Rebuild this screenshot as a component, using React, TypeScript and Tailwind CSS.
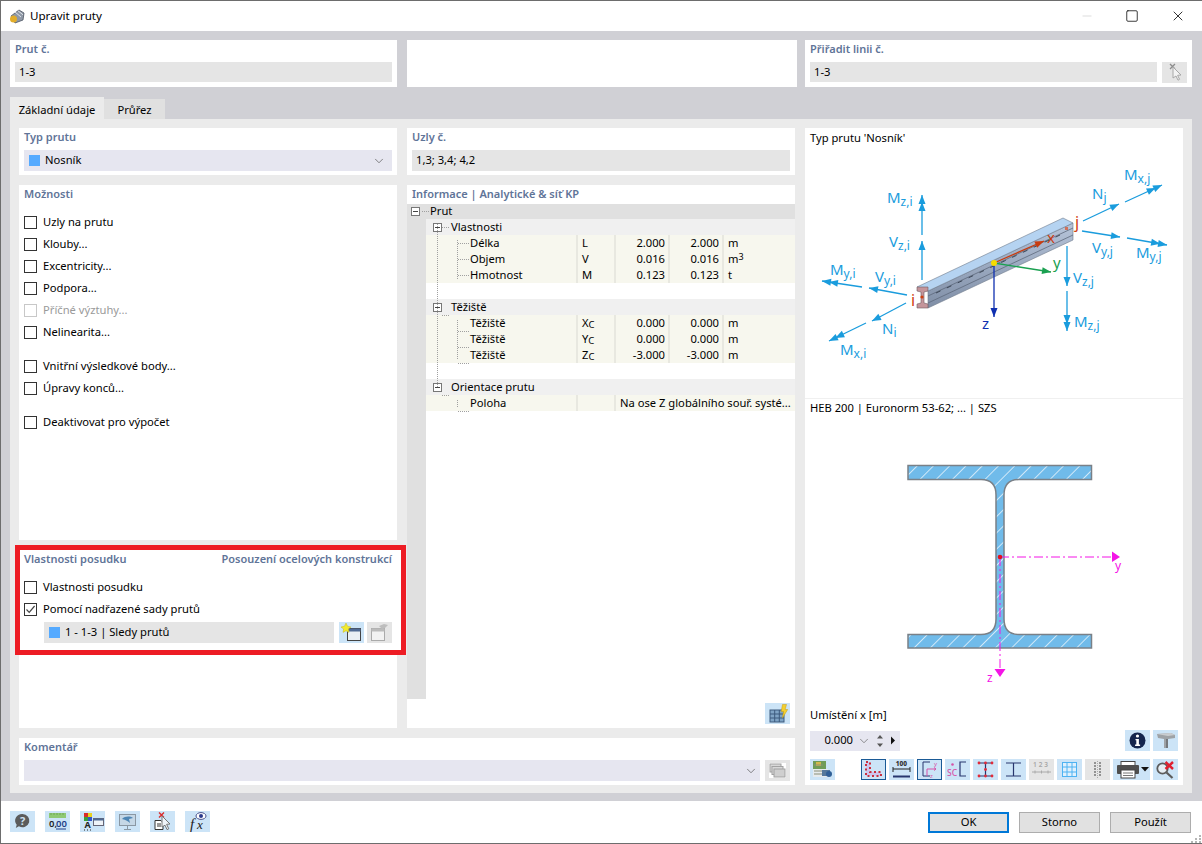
import type { ReactNode } from "react";
import { ChevronDown, Minus, Square, X } from "lucide-react";

function Panel({ title, right, className = "", children }: { title: string; right?: string; className?: string; children?: ReactNode }) {
  return (
    <div className={`bg-white px-[5px] ${className}`}>
      <div className="flex h-[22px] items-center justify-between pb-[4px] text-[11px] font-semibold text-[#5f7498]">
        <span>{title}</span>
        {right ? <span>{right}</span> : null}
      </div>
      {children}
    </div>
  );
}

function Field({ children, className = "" }: { children?: ReactNode; className?: string }) {
  return <div className={`flex h-[20px] items-center bg-[#e5e5e5] pl-[4px] pt-[1px] ${className}`}>{children}</div>;
}

function Check({ label, checked, disabled }: { label: string; checked?: boolean; disabled?: boolean }) {
  return (
    <div className={`flex h-[22px] items-center gap-[6px] ${disabled ? "text-[#9a9a9a]" : ""}`}>
      <span className={`flex h-[13px] w-[13px] items-center justify-center border ${disabled ? "border-[#c8c8c8]" : "border-[#333333]"}`}>
        {checked ? (
          <svg width="11" height="11" viewBox="0 0 11 11">
            <path d="M1.5 5.5 4.2 8.3 9.6 2" fill="none" stroke="#444" strokeWidth="1.2" />
          </svg>
        ) : null}
      </span>
      <span>{label}</span>
    </div>
  );
}

function Tool({ children, active, off, wide }: { children: ReactNode; active?: boolean; off?: boolean; wide?: boolean }) {
  return (
    <div
      className={`flex h-[21px] shrink-0 items-center justify-center ${wide ? "w-[37px]" : "w-[25px]"} ${off ? "bg-[#e5e5e5]" : "bg-[#cce4f7]"} ${
        active ? "border border-[#1a5a96]" : ""
      }`}
    >
      {children}
    </div>
  );
}

function Ico({ children, w = 25 }: { children: ReactNode; w?: number }) {
  return (
    <svg width={w} height="21" viewBox={`0 0 ${w} 21`} className="shrink-0">
      {children}
    </svg>
  );
}

const icons = {
  help: (
    <Ico>
      <path d="M12.5 3a7 6.6 0 1 1-3.6 12.3L5.8 17l.9-3.3A7 6.6 0 0 1 12.5 3Z" fill="#5c5c5c" />
      <text x="12.5" y="13.5" fontSize="11" fontWeight="700" fill="#cfe3f3" textAnchor="middle">?</text>
    </Ico>
  ),
  decimals: (
    <Ico>
      <rect x="4" y="2" width="17" height="5" fill="#8fc974" />
      <path d="M6 2v2M9 2v2M12 2v2M15 2v2M18 2v2" stroke="#6fa855" />
      <text x="4" y="16" fontSize="9.5" fontWeight="600" fill="#222">0,</text>
      <text x="11" y="16" fontSize="9.5" fontWeight="600" fill="#1f3f86">00</text>
      <path d="M11 18h10" stroke="#1f3f86" />
    </Ico>
  ),
  colors: (
    <Ico>
      <rect x="4" y="2" width="4" height="4" fill="#d92b2b" />
      <rect x="8" y="2" width="4" height="4" fill="#e8d21f" />
      <rect x="4" y="6" width="4" height="4" fill="#37a03a" />
      <rect x="8" y="6" width="4" height="4" fill="#3255c8" />
      <text x="4.5" y="17" fontSize="9" fontWeight="700" fill="#222">A</text>
      <path d="M4 19h1M7 19h1M10 19h1" stroke="#222" />
      <rect x="13.5" y="7.5" width="10" height="7" fill="#eef3f8" stroke="#667" />
      <rect x="13.5" y="7.5" width="10" height="2" fill="#4f6a94" />
    </Ico>
  ),
  display: (
    <Ico>
      <rect x="4.5" y="3.5" width="16" height="11" fill="#c5d7e6" stroke="#8a97a3" />
      <path d="M7 8c3-3 8-3 11-1l-4 1 1 4c-2-2-4-3-8-4Z" fill="#4e86b5" />
      <path d="M12.5 15v3M9 18.5h7" stroke="#8a97a3" />
    </Ico>
  ),
  delDoc: (
    <Ico>
      <path d="M9 1.5l5 5M14 1.5l-5 5" stroke="#d92b2b" strokeWidth="1.4" />
      <path d="M5 9.5h6l2 2v7H5Z" fill="#fff" stroke="#333" />
      <path d="M7 13h4M7 15h4" stroke="#333" />
      <path d="M12 5l8 8-3.4.3 2.2 4.5-1.8.8-2-4.4L12 16Z" fill="#eef3f8" stroke="#777" />
    </Ico>
  ),
  fx: (
    <Ico>
      <text x="5" y="18" fontSize="15" fontFamily="Liberation Serif, serif" fontStyle="italic" fill="#222">f</text>
      <text x="12" y="18" fontSize="13" fontFamily="Liberation Serif, serif" fontStyle="italic" fill="#222">x</text>
      <ellipse cx="16" cy="5" rx="5" ry="3.4" fill="#fff" stroke="#46508c" />
      <circle cx="16" cy="5" r="2" fill="#2c3a8c" />
    </Ico>
  ),
  pick: (
    <Ico>
      <path d="M8 2l5 5M13 2l-5 5" stroke="#8d8d8d" strokeWidth="1.3" />
      <path d="M11 5l8 8-3.4.3 2 4-1.6.9-2-4.2L11 16Z" fill="#f3f3f3" stroke="#a8a8a8" />
    </Ico>
  ),
  newSet: (
    <Ico>
      <rect x="8.5" y="6.5" width="13" height="12" fill="#e9eff5" stroke="#444" />
      <rect x="8.5" y="6.5" width="13" height="3" fill="#4f6a94" />
      <path d="M7 1l1.5 3.2L12 5 9.4 7 10 10.4 7 8.7 4 10.4 4.6 7 2 5l3.5-.8Z" fill="#f2ea2d" stroke="#c6b91d" strokeWidth=".5" />
    </Ico>
  ),
  editSet: (
    <Ico>
      <rect x="4.5" y="6.5" width="13" height="12" fill="#f2f2f2" stroke="#aaa" />
      <rect x="4.5" y="6.5" width="13" height="3" fill="#bbb" />
      <path d="M12 4l5-2 4 1-3 3-3 1Z" fill="#bdbdbd" />
    </Ico>
  ),
  gridBolt: (
    <Ico>
      <rect x="5" y="7" width="14" height="12" fill="#7fa4c6" stroke="#3d5a7e" />
      <path d="M5 11h14M5 15h14M9.7 7v12M14.3 7v12" stroke="#3d5a7e" />
      <path d="M17.5 1.5h4l-1.4 5h2.6L17.5 15l1-6.5h-2.3Z" fill="#f4cf2f" stroke="#c59c12" strokeWidth=".5" />
    </Ico>
  ),
  copies: (
    <Ico>
      <rect x="4" y="3" width="17" height="15" fill="#fff" />
      <rect x="5" y="4" width="11" height="8" fill="#d8d8d8" stroke="#a2a2a2" />
      <rect x="7" y="6.5" width="11" height="8" fill="#d8d8d8" stroke="#a2a2a2" />
      <rect x="9" y="9" width="11" height="8" fill="#cfcfcf" stroke="#a2a2a2" />
    </Ico>
  ),
  model: (
    <Ico>
      <rect x="3" y="2" width="13" height="8" fill="#6f9c58" />
      <rect x="6" y="3" width="5" height="4" fill="#d2b84c" />
      <rect x="3" y="10" width="15" height="8" fill="#e6ebee" />
      <rect x="12" y="11" width="8" height="6" fill="#54789c" />
      <path d="M4 6h9M4 12h8M4 15h8" stroke="#8a8f78" />
      <circle cx="19" cy="15" r="3" fill="#2f5f97" />
    </Ico>
  ),
  lShape: (
    <Ico w={23}>
      <path d="M4 3h4v10h11v4H4Z" fill="#cdc6ee" stroke="#c9303f" strokeWidth="2" strokeDasharray="2 2.5" />
    </Ico>
  ),
  dimension: (
    <Ico>
      <text x="12.5" y="6.5" fontSize="6.5" fontWeight="800" fill="#333" textAnchor="middle">100</text>
      <path d="M4 8v5M21 8v5M4 10h17" stroke="#222" />
      <path d="M4 17.5h17" stroke="#28366e" strokeWidth="2" />
    </Ico>
  ),
  axes: (
    <Ico w={23}>
      <path d="M12 3H5v14h7" fill="none" stroke="#28366e" />
      <path d="M9 10h9M9 10v7M16 8.5l2 1.5-2 1.5" fill="none" stroke="#d653a8" />
      <text x="16" y="6.5" fontSize="6" fill="#d653a8">y</text>
      <text x="12" y="18.5" fontSize="6" fill="#d653a8">z</text>
    </Ico>
  ),
  sc: (
    <Ico>
      <circle cx="7.5" cy="5.5" r="1.3" fill="#d653a8" />
      <text x="2" y="17" fontSize="8.5" fontWeight="500" fill="#d653a8">SC</text>
      <path d="M21 3h-6v14h6" fill="none" stroke="#28366e" strokeWidth="1.2" />
    </Ico>
  ),
  iRed: (
    <Ico>
      <path d="M6 4h13M6 17h13M12.5 4v13" stroke="#28366e" strokeWidth="1.2" />
      <g fill="#e02b3a">
        <circle cx="6" cy="4" r="1.4" />
        <circle cx="12.5" cy="4" r="1.4" />
        <circle cx="19" cy="4" r="1.4" />
        <circle cx="12.5" cy="10.5" r="1.4" />
        <circle cx="6" cy="17" r="1.4" />
        <circle cx="12.5" cy="17" r="1.4" />
        <circle cx="19" cy="17" r="1.4" />
      </g>
    </Ico>
  ),
  iPlain: (
    <Ico>
      <path d="M5 4h15M5 17h15M12.5 4v13" stroke="#28366e" strokeWidth="1.2" />
    </Ico>
  ),
  numbers: (
    <Ico>
      <text x="12.5" y="8" fontSize="6.5" fontWeight="600" fill="#a5a5a5" textAnchor="middle" letterSpacing="2">123</text>
      <path d="M3 13h19M6 11.5v3M12.5 11.5v3M19 11.5v3" stroke="#aaa" />
    </Ico>
  ),
  grid: (
    <Ico>
      <rect x="5.5" y="3.5" width="14" height="14" fill="#dff0fd" stroke="#4db2f2" />
      <path d="M5.5 8h14M5.5 13h14M10 3.5v14M15 3.5v14" stroke="#4db2f2" />
    </Ico>
  ),
  dots: (
    <Ico>
      <path d="M9 4h2M14 4h2M9 7h2M14 7h2M9 10h2M14 10h2M9 13h2M14 13h2M9 16h2M14 16h2" stroke="#777" strokeWidth="1.5" />
      <path d="M12.5 2v17" stroke="#aaa" strokeDasharray="1 1" />
    </Ico>
  ),
  print: (
    <Ico w={37}>
      <rect x="8" y="2.5" width="14" height="4" fill="#fff" stroke="#444" />
      <rect x="4" y="6" width="22" height="9" rx="1" fill="#4e4e4e" />
      <rect x="8" y="11" width="14" height="8" fill="#fff" stroke="#444" />
      <path d="M10 14h10M10 16.5h10" stroke="#777" />
      <path d="M28 8h8l-4 4.5Z" fill="#111" />
    </Ico>
  ),
  zoomX: (
    <Ico>
      <circle cx="9.5" cy="9.5" r="5.2" fill="#e6eef4" stroke="#5c5c5c" strokeWidth="1.8" />
      <path d="M13.5 13.5l6 5.5" stroke="#5c5c5c" strokeWidth="2.2" />
      <path d="M12.5 3l7.5 7M20 3l-7.5 7" stroke="#e02030" strokeWidth="2.4" />
    </Ico>
  ),
  info: (
    <Ico>
      <circle cx="12.5" cy="10.5" r="8" fill="#15254d" />
      <circle cx="12.5" cy="6" r="1.6" fill="#fff" />
      <path d="M10.5 9h3.4v5.5h1.2v1.4h-5v-1.4h1.2v-4.2h-.8Z" fill="#fff" />
    </Ico>
  ),
  tee: (
    <Ico>
      <path d="M4 4l14-1 4 2v3l-7 1v9l-4 0V9L5 8Z" fill="#9ea2a6" />
      <path d="M4 4l14-1 4 2-7 1Z" fill="#c9cccf" />
      <path d="M15 9v9h-2V9Z" fill="#74787c" />
    </Ico>
  ),
};

function Label({ x, y, label, sub, color = "#1a9cdd", size = 15 }: { x: number; y: number; label: string; sub?: string; color?: string; size?: number }) {
  return (
    <text x={x} y={y} fontSize={size} fill={color}>
      {label}
      {sub ? (
        <tspan dy="3" fontSize={size - 3}>
          {sub}
        </tspan>
      ) : null}
    </text>
  );
}

const arrows = [
  [922, 280, 922, 241],
  [922, 235, 922, 195],
  [907, 295, 869, 288],
  [862, 287, 822, 281],
  [906, 303, 872, 321],
  [866, 323, 829, 341],
  [1083, 221, 1119, 204],
  [1125, 202, 1162, 185],
  [1082, 231, 1120, 237],
  [1127, 238, 1167, 245],
  [1067, 246, 1067, 286],
  [1067, 291, 1067, 331],
];

function Head({ x1, y1, x2, y2, color, len = 9, w = 3.5 }: { x1: number; y1: number; x2: number; y2: number; color: string; len?: number; w?: number }) {
  const d = Math.hypot(x2 - x1, y2 - y1);
  const ux = (x2 - x1) / d;
  const uy = (y2 - y1) / d;
  const bx = x2 - ux * len;
  const by = y2 - uy * len;
  return <polygon points={`${x2},${y2} ${bx - uy * w},${by + ux * w} ${bx + uy * w},${by - ux * w}`} fill={color} />;
}

function MemberDiagram() {
  return (
    <svg width="378" height="249" viewBox="805 149 378 249" className="block shrink-0">
      <defs>
        <linearGradient id="beamSide" x1="0" y1="0" x2="0" y2="1">
          <stop offset="0" stopColor="#b7c5da" />
          <stop offset="1" stopColor="#7f8ea6" />
        </linearGradient>
      </defs>
      {arrows.map(([x1, y1, x2, y2], i) => (
        <g key={i}>
          <line x1={x1} y1={y1} x2={x2} y2={y2} stroke="#1a9cdd" strokeWidth="1.3" />
          <Head x1={x1} y1={y1} x2={x2} y2={y2} color="#1a9cdd" />
          {i % 2 === 1 ? (
            <Head x1={x1} y1={y1} x2={x2 - ((x2 - x1) / Math.hypot(x2 - x1, y2 - y1)) * 7} y2={y2 - ((y2 - y1) / Math.hypot(x2 - x1, y2 - y1)) * 7} color="#1a9cdd" />
          ) : null}
        </g>
      ))}
      <polygon points="928,291 1073,223 1073,240 928,308" fill="url(#beamSide)" stroke="#6f7a8c" strokeWidth=".6" />
      <polygon points="917,287 1063,218 1073,223 928,291" fill="#b5d3f1" stroke="#6f7a8c" strokeWidth=".6" />
      <path d="M928 296 1073 228M928 303 1073 235" stroke="#5e6a7c" strokeWidth=".8" />
      <path d="M936 293 1060 235" stroke="#333d4d" strokeWidth=".9" strokeDasharray="5 7" />
      <path d="M917 287h11v4l-4 1v11l4 1v4h-11v-4l4-1v-11l-4-1Z" fill="#c4959b" stroke="#6f5a62" strokeWidth=".6" />
      <circle cx="922" cy="297" r="1.6" fill="#d04010" />
      <rect x="1065" y="227" width="3" height="3" fill="#d0705a" />
      <line x1="994" y1="263" x2="1044" y2="241" stroke="#c83c10" strokeWidth="1.3" />
      <Head x1={994} y1={263} x2={1044} y2={241} color="#c83c10" />
      <line x1="994" y1="263" x2="1051" y2="272" stroke="#1aa050" strokeWidth="1.3" />
      <Head x1={994} y1={263} x2={1051} y2={272} color="#1aa050" />
      <line x1="994" y1="263" x2="994" y2="317" stroke="#1030b0" strokeWidth="1.3" />
      <Head x1={994} y1={263} x2={994} y2={317} color="#1030b0" />
      <circle cx="994" cy="263" r="3" fill="#f6dc00" />

      <Label x={887} y={203} label="M" sub="z,i" />
      <Label x={889} y={247} label="V" sub="z,i" />
      <Label x={830} y={275} label="M" sub="y,i" />
      <Label x={875} y={282} label="V" sub="y,i" />
      <Label x={882} y={334} label="N" sub="i" />
      <Label x={840} y={355} label="M" sub="x,i" />
      <Label x={1124} y={180} label="M" sub="x,j" />
      <Label x={1092} y={199} label="N" sub="j" />
      <Label x={1092} y={253} label="V" sub="y,j" />
      <Label x={1136} y={258} label="M" sub="y,j" />
      <Label x={1073} y={283} label="V" sub="z,j" />
      <Label x={1074} y={327} label="M" sub="z,j" />
      <Label x={911} y={306} label="i" color="#d04010" size={16} />
      <Label x={1075} y={228} label="j" color="#d04010" size={16} />
      <Label x={1047} y={243} label="x" color="#c83c10" size={15} />
      <Label x={1053} y={268} label="y" color="#1aa050" size={15} />
      <Label x={982} y={329} label="z" color="#1030b0" size={15} />
    </svg>
  );
}

function SectionDiagram() {
  return (
    <svg width="378" height="287" viewBox="805 418 378 287" className="block shrink-0">
      <defs>
        <pattern id="hatch" width="11.5" height="11.5" patternUnits="userSpaceOnUse" patternTransform="rotate(45)">
          <rect width="11.5" height="11.5" fill="#70bbea" />
          <line x1="0" y1="0" x2="0" y2="11.5" stroke="#e6f3fb" strokeWidth="1.6" />
        </pattern>
      </defs>
      <path
        d="M908 465.5H1091.5V479.5H1019Q1004 479.5 1004 495V619Q1004 634.5 1019 634.5H1091.5V648H908V634.5H981Q996 634.5 996 619V495Q996 479.5 981 479.5H908Z"
        fill="url(#hatch)"
        stroke="#7a8087"
        strokeWidth="1.5"
      />
      <line x1="1000" y1="557" x2="1114" y2="557" stroke="#f414e6" strokeWidth="1" strokeDasharray="9 3 2 3" />
      <polygon points="1112,551.5 1120,557 1112,562" fill="#f414e6" />
      <line x1="1000" y1="557" x2="1000" y2="670" stroke="#f414e6" strokeWidth="1" strokeDasharray="9 3 2 3" />
      <polygon points="994.5,669 1005.5,669 1000,677" fill="#f414e6" />
      <circle cx="1000" cy="557" r="2.3" fill="#e4101c" />
      <text x="1115" y="570" fontSize="12" fill="#f414e6">y</text>
      <text x="987" y="682" fontSize="12" fill="#f414e6">z</text>
    </svg>
  );
}

function Tree({ x, y = 4 }: { x: number; y?: number }) {
  return (
    <span className="absolute flex h-[9px] w-[9px] items-center justify-center border border-[#777777] bg-white" style={{ left: x, top: y }}>
      <span className="h-px w-[5px] bg-[#444444]" />
    </span>
  );
}

function DataRow({ name, sym, sub, a, b, unit, sup }: { name: string; sym: string; sub?: string; a: string; b: string; unit: string; sup?: string }) {
  return (
    <div className="grid h-4 grid-cols-[150px_38px_54px_54px_1fr] items-center bg-[#f7f7ee]">
      <span className="pl-[44px]">{name}</span>
      <span className="flex h-4 items-center border-l-2 border-[#e8e8e0] pl-1">
        {sym}
        {sub ? <span className="mt-[3px] text-[9.5px]">{sub}</span> : null}
      </span>
      <span className="flex h-4 items-center justify-end border-l-2 border-[#e8e8e0] pr-[3px]">{a}</span>
      <span className="flex h-4 items-center justify-end border-l-2 border-[#e8e8e0] pr-[3px]">{b}</span>
      <span className="flex h-4 items-center border-l-2 border-[#e8e8e0] pl-1">
        {unit}
        {sup ? <span className="mb-[5px] text-[9px]">{sup}</span> : null}
      </span>
    </div>
  );
}

function GroupRow({ label, x = 7 }: { label: string; x?: number }) {
  return (
    <div className="relative flex h-4 items-center bg-[#f0f0f0] pl-[25px]">
      <Tree x={x} />
      {label}
    </div>
  );
}

function InfoTree() {
  return (
    <div className="relative -mx-[5px] flex-1">
      <div className="relative flex h-[15px] items-center bg-[#e0e0e0] pl-[23px]">
        <Tree x={4} y={3} />
        Prut
      </div>
      <div className="flex">
        <div className="h-[480px] w-[19px] bg-[#e0e0e0]" />
        <div className="flex-1">
          <GroupRow label="Vlastnosti" />
          <DataRow name="Délka" sym="L" a="2.000" b="2.000" unit="m" />
          <DataRow name="Objem" sym="V" a="0.016" b="0.016" unit="m" sup="3" />
          <DataRow name="Hmotnost" sym="M" a="0.123" b="0.123" unit="t" />
          <div className="h-4" />
          <GroupRow label="Těžiště" />
          <DataRow name="Těžiště" sym="X" sub="C" a="0.000" b="0.000" unit="m" />
          <DataRow name="Těžiště" sym="Y" sub="C" a="0.000" b="0.000" unit="m" />
          <DataRow name="Těžiště" sym="Z" sub="C" a="-3.000" b="-3.000" unit="m" />
          <div className="h-4" />
          <GroupRow label="Orientace prutu" />
          <div className="grid h-4 grid-cols-[150px_38px_1fr] items-center bg-[#f7f7ee]">
            <span className="pl-[44px]">Poloha</span>
            <span className="h-4 border-l-2 border-[#e8e8e0]" />
            <span className="flex h-4 items-center whitespace-nowrap border-l-2 border-[#e8e8e0] pl-1">Na ose Z globálního souř. systé...</span>
          </div>
        </div>
      </div>
      {/* dotted tree lines */}
      <svg className="pointer-events-none absolute left-0 top-0" width="70" height="210" viewBox="0 0 70 210">
        <path d="M30.5 20V183M50.5 36V76M50.5 116V156M50.5 196V204" stroke="#a0a0a0" strokeDasharray="1 1" fill="none" />
        <path d="M15 7.5H22M35 23.5H42M51 39.5H62M51 55.5H62M51 71.5H62M35 111.5H42M51 127.5H62M51 143.5H62M51 159.5H62M35 191.5H42M51 207.5H62" stroke="#a0a0a0" strokeDasharray="1 1" fill="none" />
      </svg>
    </div>
  );
}

function DialogButton({ children, primary }: { children: ReactNode; primary?: boolean }) {
  return (
    <div className={`flex h-[21px] w-[81px] items-center justify-center bg-[#e1e1e1] ${primary ? "border-2 border-[#0078d7]" : "border border-[#adadad]"}`}>
      {children}
    </div>
  );
}

export default function App() {
  return (
    <div className="relative flex h-[844px] w-[1202px] flex-col overflow-hidden border-b border-l border-t border-[#6d6d6d] bg-white font-['Noto_Sans',sans-serif] text-[11.2px] text-black">
      {/* title bar */}
      <div className="flex h-[30px] shrink-0 items-center pl-[8px]">
        <svg width="16" height="16" viewBox="0 0 16 16" className="shrink-0">
          <path d="M2 8l8-6 5 3-1 7-8 3Z" fill="#8f98a6" stroke="#4c5462" strokeWidth=".8" />
          <path d="M6 4l6 5M9 2.8l5 4" stroke="#dfe4ea" />
          <circle cx="4.5" cy="11" r="3.5" fill="#e2ad2a" />
        </svg>
        <span className="ml-[5px] text-[11.6px]">Upravit pruty</span>
        <div className="ml-auto flex items-center text-black">
          <Minus className="mr-[31px] h-[14px] w-[14px] text-[#c4c4c4]" strokeWidth={1} />
          <Square className="mr-[31px] h-[14px] w-[14px]" strokeWidth={1.3} />
          <X className="mr-[16px] h-[16px] w-[16px]" strokeWidth={1.2} />
        </div>
      </div>

      {/* body */}
      <div className="flex h-[770px] shrink-0 flex-col bg-[#d0d0d5] pl-[9px] pr-[10px] pt-[9px]">
        <div className="flex h-[47px] shrink-0">
          <Panel title="Prut č." className="w-[387px]">
            <Field>1-3</Field>
          </Panel>
          <div className="ml-[10px] w-[390px] bg-white" />
          <Panel title="Přiřadit linii č." className="ml-[8px] w-[387px]">
            <div className="flex gap-[5px]">
              <Field className="flex-1">1-3</Field>
              <Tool off>{icons.pick}</Tool>
            </div>
          </Panel>
        </div>

        <div className="mt-[10px] flex h-[22px] shrink-0 items-end">
          <div className="flex h-[22px] w-[94px] items-center justify-center bg-[#ebebeb] pt-[4px]">Základní údaje</div>
          <div className="flex h-[20px] w-[61px] items-center justify-center bg-[#e0e0e0] pt-[2px]">Průřez</div>
        </div>

        <div className="flex h-[674px] shrink-0 gap-[10px] bg-[#ebebeb] p-[9px] pb-[8px]">
          <div className="flex w-[776px] flex-col gap-[10px]">
            <div className="flex h-[600px] gap-[10px]">
              {/* left column */}
              <div className="flex w-[378px] flex-col">
                <Panel title="Typ prutu" className="h-[47px] shrink-0">
                  <div className="flex h-[21px] items-center bg-[#e6e6f0] pl-[5px] pr-[6px]">
                    <span className="mr-[5px] h-[11px] w-[11px] bg-[#55aaff]" />
                    Nosník
                    <ChevronDown className="ml-auto h-[14px] w-[14px] text-[#555555]" strokeWidth={1.2} />
                  </div>
                </Panel>
                <Panel title="Možnosti" className="mt-[10px] h-[355px] shrink-0">
                  <div className="pt-[4px]">
                    <Check label="Uzly na prutu" />
                    <Check label="Klouby..." />
                    <Check label="Excentricity..." />
                    <Check label="Podpora..." />
                    <Check label="Příčné výztuhy..." disabled />
                    <Check label="Nelinearita..." />
                    <div className="h-3" />
                    <Check label="Vnitřní výsledkové body..." />
                    <Check label="Úpravy konců..." />
                    <div className="h-3" />
                    <Check label="Deaktivovat pro výpočet" />
                  </div>
                </Panel>
                <div className="mt-[8px] h-[180px] shrink-0 bg-white">
                  {/* red annotation frame around the design group */}
                  <div className="-ml-[4px] -mt-[3px] h-[110px] w-[391px] border-[5px] border-[#ed1c24] bg-white px-[4px] pt-[1px]">
                    <div className="flex h-[16px] items-center justify-between pr-[5px] text-[11px] font-semibold text-[#5f7498]">
                      <span>Vlastnosti posudku</span>
                      <span>Posouzení ocelových konstrukcí</span>
                    </div>
                    <div className="mt-[9px]">
                      <Check label="Vlastnosti posudku" />
                      <Check label="Pomocí nadřazené sady prutů" checked />
                    </div>
                    <div className="ml-[20px] mr-[5px] mt-[2px] flex gap-[5px]">
                      <div className="flex h-[21px] flex-1 items-center bg-[#e5e5e5] pl-[5px]">
                        <span className="mr-[5px] h-[11px] w-[11px] bg-[#55aaff]" />1 - 1-3 | Sledy prutů
                      </div>
                      <div className="flex gap-[3px]">
                        <Tool>{icons.newSet}</Tool>
                        <Tool off>{icons.editSet}</Tool>
                      </div>
                    </div>
                  </div>
                </div>
              </div>

              {/* middle column */}
              <div className="flex w-[388px] flex-col">
                <Panel title="Uzly č." className="h-[47px] shrink-0">
                  <div className="flex h-[21px] items-center bg-[#e5e5e5] pl-[4px]">1,3; 3,4; 4,2</div>
                </Panel>
                <div className="mt-[10px] flex h-[543px] shrink-0 flex-col bg-white px-[5px]">
                  <div className="flex h-[19px] shrink-0 items-center text-[11px] font-semibold text-[#5f7498]">Informace | Analytické &amp; síť KP</div>
                  <InfoTree />
                  <div className="mb-[4px] mt-[4px] flex justify-end">
                    <Tool>{icons.gridBolt}</Tool>
                  </div>
                </div>
              </div>
            </div>

            <Panel title="Komentář" className="h-[47px] shrink-0">
              <div className="flex gap-[5px]">
                <div className="flex h-[21px] flex-1 items-center justify-end bg-[#e6e6f0] pr-[2px]">
                  <ChevronDown className="h-[14px] w-[14px] text-[#555555]" strokeWidth={1.2} />
                </div>
                <Tool off>{icons.copies}</Tool>
              </div>
            </Panel>
          </div>

          {/* right column */}
          <div className="flex w-[378px] flex-col bg-white">
            <div className="flex h-[21px] shrink-0 items-center px-[5px]">Typ prutu 'Nosník'</div>
            <MemberDiagram />
            <div className="flex h-[20px] shrink-0 items-center border-t border-[#f0f0f0] px-[5px]">HEB 200 | Euronorm 53-62; ... | SZS</div>
            <SectionDiagram />
            <div className="flex h-[20px] shrink-0 items-center px-[5px]">Umístění x [m]</div>
            <div className="mt-[5px] flex h-[21px] shrink-0 items-center justify-between pl-[5px] pr-[5px]">
              <div className="flex h-[20px] w-[90px] items-center bg-[#e6e6f0] pl-[13px]">
                <span className="w-[30px] text-right">0.000</span>
                <ChevronDown className="ml-[4px] h-[14px] w-[14px] text-[#666666]" strokeWidth={1.2} />
                <svg width="8" height="14" viewBox="0 0 8 14" className="ml-[5px]">
                  <path d="M4 1l3 3.5H1ZM4 13l3-3.5H1Z" fill="#555" />
                </svg>
                <svg width="6" height="9" viewBox="0 0 6 9" className="ml-[6px]">
                  <path d="M1 .5l4 4-4 4Z" fill="#111" />
                </svg>
              </div>
              <div className="flex gap-[3px]">
                <Tool>{icons.info}</Tool>
                <Tool>{icons.tee}</Tool>
              </div>
            </div>
            <div className="mt-[8px] flex h-[21px] shrink-0 pl-[5px]">
              <Tool>{icons.model}</Tool>
              <div className="ml-[26px] flex gap-[3px]">
                <Tool active>{icons.lShape}</Tool>
                <Tool>{icons.dimension}</Tool>
                <Tool active>{icons.axes}</Tool>
                <Tool>{icons.sc}</Tool>
                <Tool>{icons.iRed}</Tool>
                <Tool>{icons.iPlain}</Tool>
                <Tool off>{icons.numbers}</Tool>
                <Tool>{icons.grid}</Tool>
                <Tool off>{icons.dots}</Tool>
                <Tool wide>{icons.print}</Tool>
                <Tool>{icons.zoomX}</Tool>
              </div>
            </div>
          </div>
        </div>
      </div>

      {/* footer */}
      <div className="flex flex-1 items-start justify-between pl-[9px] pr-[11px] pt-[10px]">
        <div className="flex gap-[10px]">
          <Tool>{icons.help}</Tool>
          <Tool>{icons.decimals}</Tool>
          <Tool>{icons.colors}</Tool>
          <Tool>{icons.display}</Tool>
          <Tool>{icons.delDoc}</Tool>
          <Tool>{icons.fx}</Tool>
        </div>
        <div className="flex gap-[10px] pt-px">
          <DialogButton primary>OK</DialogButton>
          <DialogButton>Storno</DialogButton>
          <DialogButton>Použít</DialogButton>
        </div>
      </div>
      <svg className="absolute bottom-0 right-0" width="12" height="9" viewBox="0 0 12 9">
        <path d="M9 1h2v2H9ZM5 4h2v2H5ZM9 4h2v2H9ZM1 7h2v2H1ZM5 7h2v2H5ZM9 7h2v2H9Z" fill="#b5b5b5" />
      </svg>
    </div>
  );
}
